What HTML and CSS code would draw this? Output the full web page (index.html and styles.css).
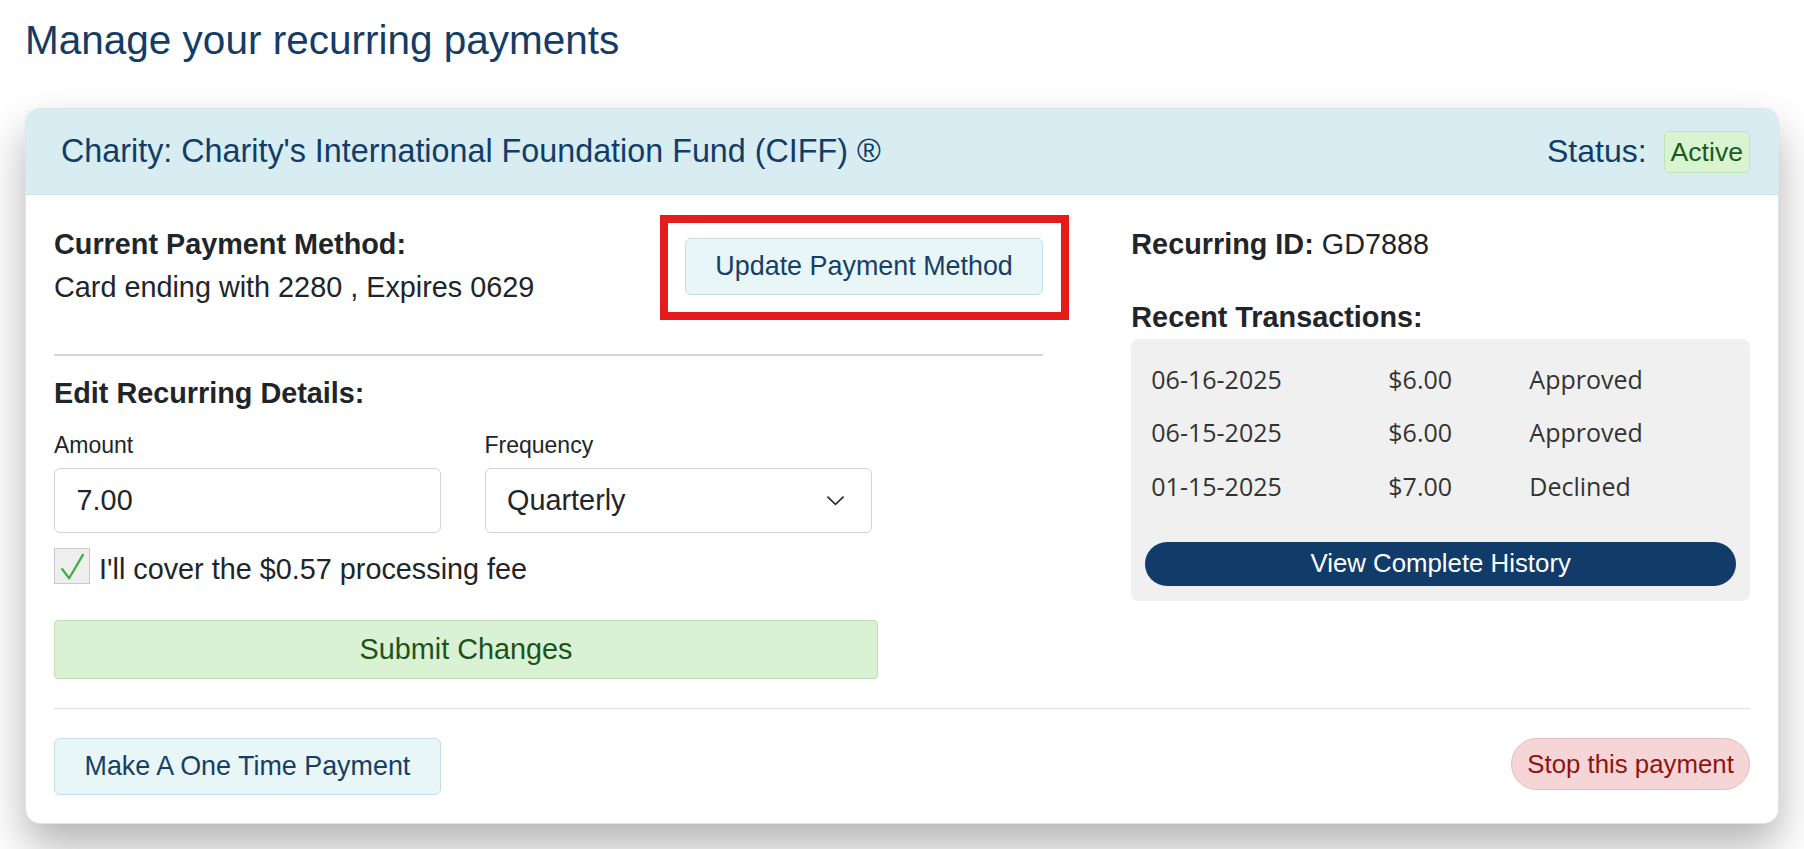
FILE: index.html
```html
<!DOCTYPE html>
<html lang="en">
<head>
<meta charset="utf-8">
<title>Manage your recurring payments</title>
<link rel="stylesheet" href="styles.css">
</head>
<body>
<main class="page">
  <h1 class="page-title">Manage your recurring payments</h1>
  <section class="card">
    <header class="card-header">
      <h2 class="charity-name">Charity: Charity's International Foundation Fund (CIFF) ®</h2>
      <div class="status">Status: <span class="badge-active">Active</span></div>
    </header>
    <div class="card-body">
      <div class="main-grid">
        <div class="left-col">
          <div class="pm-row">
            <div class="pm-info">
              <div class="label-bold">Current Payment Method:</div>
              <div>Card ending with 2280 , Expires 0629</div>
            </div>
            <button class="btn-soft btn-update" type="button">Update Payment Method</button>
          </div>
          <hr class="divider">
          <div class="label-bold">Edit Recurring Details:</div>
          <div class="form-area">
            <div class="form-grid">
              <div class="field">
                <label class="field-label" for="amount">Amount</label>
                <input class="control" id="amount" type="text" value="7.00">
              </div>
              <div class="field">
                <label class="field-label" for="freq">Frequency</label>
                <div class="select-wrap">
                  <select class="control select" id="freq"><option>Quarterly</option></select>
                  <svg class="chev" viewBox="0 0 20 11" aria-hidden="true"><polyline points="1.5,1.5 10,9.5 18.5,1.5" fill="none" stroke="#2b2f33" stroke-width="1.8"/></svg>
                </div>
              </div>
            </div>
            <div class="check-row">
              <span class="checkbox"><svg viewBox="0 0 36 36" aria-hidden="true"><polyline points="7,20.5 15,31 30,5.5" fill="none" stroke="#43ab43" stroke-width="2.4" stroke-linejoin="round"/></svg></span>
              <span>I'll cover the $0.57 processing fee</span>
            </div>
            <button class="btn-submit" type="button">Submit Changes</button>
          </div>
        </div>
        <div class="right-col">
          <div class="rid"><span class="label-bold">Recurring ID:</span> GD7888</div>
          <div class="label-bold">Recent Transactions:</div>
          <div class="tx-box">
            <div class="tx-row"><span>06-16-2025</span><span>$6.00</span><span>Approved</span></div>
            <div class="tx-row"><span>06-15-2025</span><span>$6.00</span><span>Approved</span></div>
            <div class="tx-row"><span>01-15-2025</span><span>$7.00</span><span>Declined</span></div>
            <button class="btn-history" type="button">View Complete History</button>
          </div>
        </div>
      </div>
      <hr class="footer-divider">
      <div class="footer-actions">
        <button class="btn-soft" type="button">Make A One Time Payment</button>
        <button class="btn-stop" type="button">Stop this payment</button>
      </div>
    </div>
  </section>
</main>
</body>
</html>
```

FILE: styles.css
```css
html, body {
  margin: 0;
  padding: 0;
  background: #ffffff;
}

body {
  font-family: "Liberation Sans", Arial, sans-serif;
  color: #212529;
}

.page {
  padding: 15.5px 25px 60px;
}

.page-title {
  margin: 0 0 44.8px;
  font-size: 40.5px;
  line-height: 48px;
  font-weight: normal;
  color: #133c66;
}

.card {
  background: #ffffff;
  border: 1px solid #dde3e6;
  border-radius: 15px;
  overflow: hidden;
  box-shadow: 0 22px 44px rgba(0, 0, 0, 0.3);
}

.card-header {
  display: flex;
  align-items: center;
  justify-content: space-between;
  height: 85px;
  padding: 0 28px 0 35px;
  background: #d7edf2;
  border-bottom: 1px solid #c8dfe5;
}

.charity-name {
  margin: 0;
  font-size: 32.3px;
  line-height: 1.2;
  font-weight: normal;
  color: #133c66;
}

.status {
  display: flex;
  align-items: center;
  gap: 17px;
  font-size: 32px;
  color: #133c66;
}

.badge-active {
  font-size: 26.6px;
  line-height: 40px;
  padding: 0 6px;
  background: #d9f4d1;
  border: 1px solid #c2e3b8;
  border-radius: 5px;
  color: #1d5a1f;
}

.card-body {
  padding: 28px;
  font-size: 28.8px;
  line-height: 1.5;
}

.main-grid {
  display: grid;
  grid-template-columns: 7fr 5fr;
}

.right-col {
  padding-left: 88px;
}

.label-bold {
  font-weight: bold;
}

.pm-row {
  display: flex;
  justify-content: space-between;
  align-items: flex-start;
}

.btn-soft {
  font-family: inherit;
  font-size: 26.9px;
  line-height: 40px;
  padding: 7.2px 29.5px;
  background: #e8f6f8;
  border: 1px solid #c6dde2;
  border-radius: 6px;
  color: #173f66;
}

.btn-update {
  position: relative;
  margin-top: 15px;
}

.btn-update::after {
  content: "";
  position: absolute;
  top: -24.3px;
  left: -26.2px;
  right: -26.5px;
  bottom: -26px;
  border: 8px solid #e41c1c;
  pointer-events: none;
}

.divider {
  margin: 44.3px 0 15.7px;
  height: 0;
  border: 0;
  border-top: 2px solid #d6d6d6;
}

.form-area {
  width: 824px;
}

.form-grid {
  display: grid;
  grid-template-columns: 387px 387px;
  column-gap: 43.5px;
  margin-top: 13.1px;
}

.field-label {
  display: block;
  font-size: 23px;
  line-height: 34.5px;
  margin-bottom: 5.2px;
}

.control {
  box-sizing: border-box;
  display: block;
  width: 100%;
  height: 65px;
  padding: 0 21.6px;
  font-family: inherit;
  font-size: 28.8px;
  color: #212529;
  background: #ffffff;
  border: 1px solid #ced4da;
  border-radius: 6px;
}

.select {
  appearance: none;
  -webkit-appearance: none;
}

.select-wrap {
  position: relative;
}

.chev {
  position: absolute;
  right: 27px;
  top: 27px;
  width: 19px;
  height: 11px;
  pointer-events: none;
}

.check-row {
  display: flex;
  align-items: flex-start;
  gap: 9px;
  margin-top: 15.3px;
}

.checkbox {
  flex: none;
  width: 34px;
  height: 34px;
  background: #eeeeee;
  border: 1px solid #c9c9c9;
}

.checkbox svg {
  display: block;
  width: 34px;
  height: 34px;
}

.btn-submit {
  display: block;
  width: 100%;
  margin-top: 29.1px;
  padding: 6.6px 0;
  font-family: inherit;
  font-size: 28.8px;
  line-height: 43.2px;
  background: #d9f2d3;
  border: 1px solid #c0dcb9;
  border-radius: 4px;
  color: #1d521d;
}

.rid {
  margin-bottom: 29.6px;
}

.tx-box {
  background: #f0f0f0;
  border-radius: 8px;
  padding: 13.5px 14px 15px;
}

.tx-row {
  display: grid;
  grid-template-columns: 237px 141px 1fr;
  padding-left: 6px;
  height: 53.5px;
  line-height: 53.5px;
  font-family: "Open Sans", "Noto Sans", sans-serif;
  font-size: 25px;
  color: #333333;
}

.btn-history {
  display: block;
  width: 100%;
  height: 44px;
  margin-top: 28.4px;
  padding: 0;
  font-family: "Liberation Sans", Arial, sans-serif;
  font-size: 25.8px;
  background: #113c69;
  color: #ffffff;
  border: 0;
  border-radius: 22px;
}

.footer-divider {
  margin: 29.6px 0 29px;
  height: 0;
  border: 0;
  border-top: 1px solid #dee2e6;
}

.footer-actions {
  display: flex;
  justify-content: space-between;
  align-items: flex-start;
}

.btn-stop {
  font-family: inherit;
  font-size: 25.8px;
  line-height: 38.7px;
  padding: 5.5px 15.2px;
  background: #f6d5d6;
  border: 1px solid #e0bcbd;
  border-radius: 26px;
  color: #8e1414;
}
```
